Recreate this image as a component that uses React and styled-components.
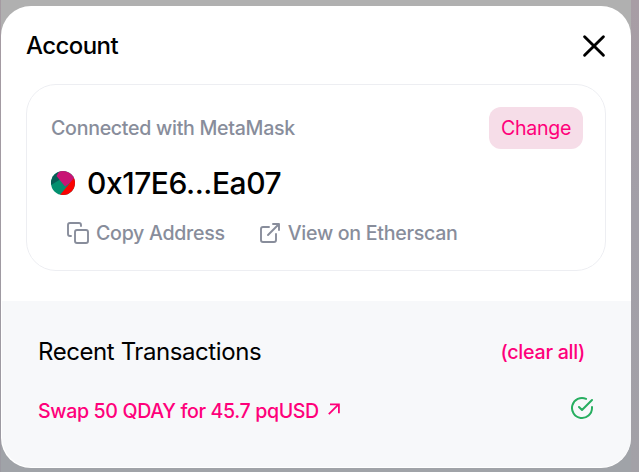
import React from "react";
import styled, { createGlobalStyle } from "styled-components";

const GlobalStyle = createGlobalStyle`
  * { box-sizing: border-box; }
  body { margin: 0; overflow: hidden; font-family: "Inter", sans-serif; letter-spacing: -0.018em; font-weight: 400; }
  button { font: inherit; letter-spacing: inherit; border: 0; padding: 0; background: none; cursor: pointer; }
  svg { display: block; flex: none; }
`;

const Backdrop = styled.main`
  width: 639px;
  height: 472px;
  padding: 6px 8px 4px 1px;
  background:
    linear-gradient(#a89da5, #a29fa8 45%, #a3a1a7) right / 8px 100% no-repeat,
    linear-gradient(#a59ba2, #9c9aa2) left / 1px 100% no-repeat,
    linear-gradient(#b0b0b0 0 50%, #a0a3a8 50%);
`;

const Modal = styled.section`
  display: flex;
  flex-direction: column;
  height: 462px;
  padding: 0 0 1px 1px;
  border-radius: 30px;
  background: #fff;
  overflow: hidden;
`;

const Header = styled.header`
  display: flex;
  justify-content: space-between;
  align-items: center;
  height: 78px;
  flex: none;
  padding: 1px 25px 0 24px;
`;

const Title = styled.h1`
  margin: 0;
  font-size: 24px;
  line-height: 30px;
  font-weight: 500;
  letter-spacing: -0.024em;
`;

const AccountCard = styled.div`
  flex: none;
  height: 187px;
  margin: 0 25px 0 24px;
  padding: 22px 22px 0 24px;
  border: 1px solid #edeef2;
  border-radius: 30px;
`;

const CardRow = styled.div`
  display: flex;
  justify-content: space-between;
  align-items: center;
  height: 42px;
  color: #888d9b;
  font-size: 19.6px;
  font-weight: 500;
`;

const ChangeButton = styled.button`
  width: 94px;
  height: 42px;
  border-radius: 12px;
  background: #f6dde8;
  color: #ff007a;
  font-size: 19.6px;
  font-weight: 400;
`;

const AddressRow = styled.div`
  display: flex;
  align-items: center;
  gap: 12px;
  height: 38px;
  margin-top: 15px;
  font-size: 30px;
  font-weight: 500;
  letter-spacing: -0.015em;
`;

const Actions = styled.div`
  display: flex;
  align-items: center;
  gap: 33px;
  height: 28px;
  margin: 17px 0 0 15px;
  color: #888d9b;
  font-size: 19.6px;
  font-weight: 500;
`;

const Action = styled.button`
  display: flex;
  align-items: center;
  gap: 6px;
  color: inherit;
`;

const Transactions = styled.section`
  flex: 1;
  margin-top: 30px;
  padding: 35px 37px 0 36px;
  border-radius: 0 0 30px 30px;
  background: #f7f8fa;
  color: #ff007a;
`;

const TransactionHead = styled.div`
  display: flex;
  justify-content: space-between;
  align-items: center;
  height: 31px;
  padding-right: 9px;
  font-size: 19.7px;
  font-weight: 500;
`;

const RecentTitle = styled.h2`
  margin: 0;
  color: #000;
  font-size: 24px;
  line-height: 30px;
  font-weight: 400;
  letter-spacing: -0.0175em;
`;

const Transaction = styled.div`
  display: flex;
  justify-content: space-between;
  align-items: center;
  height: 30px;
  margin-top: 29px;
  font-size: 19.6px;
  font-weight: 500;
  letter-spacing: -0.0185em;
`;

const TransactionLink = styled.span`
  display: flex;
  align-items: center;
  gap: 9px;
`;

const StrokeIcon = styled.svg.attrs({ fill: "none", stroke: "currentColor", viewBox: "0 0 24 24" })`
  width: 24px;
  height: 24px;
  stroke-width: ${(p) => p.$weight || 2};
  stroke-linecap: round;
  stroke-linejoin: round;
`;

const ArrowIcon = styled.svg`
  width: 12px;
  height: 12px;
  transform: translateY(-2px);
`;

const Status = styled.span`
  color: #27ae60;
  transform: translateY(-3px);
`;

export default function App() {
  return (
    <>
      <GlobalStyle />
      <Backdrop>
        <Modal role="dialog" aria-label="Account">
          <Header>
            <Title>Account</Title>
            <button aria-label="Close">
              <StrokeIcon $weight={2.9}>
                <path d="M2.6 2.7 21.4 21.3M21.4 2.7 2.6 21.3" />
              </StrokeIcon>
            </button>
          </Header>
          <AccountCard>
            <CardRow>
              <span>Connected with MetaMask</span>
              <ChangeButton>Change</ChangeButton>
            </CardRow>
            <AddressRow>
              <svg width="24" height="24" viewBox="0 0 24 24">
                <defs><clipPath id="avatar"><circle cx="12" cy="12" r="12" /></clipPath></defs>
                <g clipPath="url(#avatar)">
                  <path fill="#03906f" d="M0 0h24v24H0z" />
                  <path fill="#075e56" d="M0 0h8l2 8L0 14z" />
                  <path fill="#c81475" d="M5.5 5 10-3 27 0v6l-13 9.5z" />
                  <path fill="#fa0202" d="M9 24 23 7h4v19H8z" />
                </g>
              </svg>
              <span>0x17E6...Ea07</span>
            </AddressRow>
            <Actions>
              <Action>
                <StrokeIcon $weight={1.9}>
                  <rect x="9" y="9" width="13" height="13" rx="2" />
                  <path d="M5 15H4a2 2 0 0 1-2-2V4a2 2 0 0 1 2-2h9a2 2 0 0 1 2 2v1" />
                </StrokeIcon>
                <span>Copy Address</span>
              </Action>
              <Action>
                <StrokeIcon $weight={1.9}>
                  <path d="M18 13v6a2 2 0 0 1-2 2H5a2 2 0 0 1-2-2V8a2 2 0 0 1 2-2h6M15 3h6v6M10 14 21 3" />
                </StrokeIcon>
                <span>View on Etherscan</span>
              </Action>
            </Actions>
          </AccountCard>
          <Transactions>
            <TransactionHead>
              <RecentTitle>Recent Transactions</RecentTitle>
              <span>(clear all)</span>
            </TransactionHead>
            <Transaction>
              <TransactionLink>
                <span>Swap 50 QDAY for 45.7 pqUSD</span>
                <ArrowIcon viewBox="0 0 12 12" fill="none" stroke="currentColor" strokeWidth="1.8">
                  <path d="M.8 11.2 10.6 1.4M2 1.4h8.9v8.9" />
                </ArrowIcon>
              </TransactionLink>
              <Status>
                <StrokeIcon>
                  <path d="M22 11.08V12a10 10 0 1 1-5.93-9.14M22 4 12 14.01l-3-3" />
                </StrokeIcon>
              </Status>
            </Transaction>
          </Transactions>
        </Modal>
      </Backdrop>
    </>
  );
}
